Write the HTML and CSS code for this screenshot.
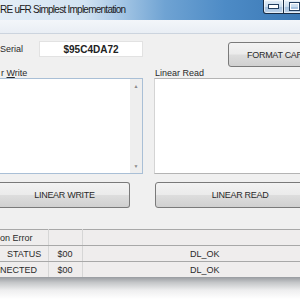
FILE: index.html
```html
<!DOCTYPE html>
<html lang="en">
<head>
  <meta charset="UTF-8">
  <title>uFR Simplest Implementation</title>
  <link rel="stylesheet" href="styles.css">
</head>
<body>
  <div class="window">
    <div class="titlebar">
      <span class="title">RE uFR Simplest Implementation</span>
      <div class="controls">
        <span class="ctl">
          <svg width="11" height="5" viewBox="0 0 11 5"><rect x="0.5" y="0.5" width="10" height="4" fill="#fff" stroke="#233f60"/></svg>
        </span>
        <span class="ctl">
          <svg width="11" height="9" viewBox="0 0 11 9"><rect x="1" y="1" width="9" height="7" fill="none" stroke="#233f60" stroke-width="2"/><rect x="1.5" y="1.5" width="8" height="6" fill="none" stroke="#fff"/></svg>
        </span>
      </div>
    </div>
    <div class="band"></div>

    <div class="panel">
      <div class="top-row">
        <div class="serial">
          <span class="serial-label">Serial</span>
          <div class="serial-box">$95C4DA72</div>
        </div>
        <button class="btn btn-format">FORMAT CARD</button>
      </div>

      <div class="io">
        <div class="col">
          <div class="lbl">r <u>W</u>rite</div>
          <div class="memo memo-write">
            <div class="scrollbar">
              <span class="arrow">&#9650;</span>
              <span class="arrow">&#9660;</span>
            </div>
          </div>
          <button class="btn btn-write">LINEAR WRITE</button>
        </div>
        <div class="col">
          <div class="lbl">Linear Read</div>
          <div class="memo memo-read"></div>
          <button class="btn btn-read">LINEAR READ</button>
        </div>
      </div>

      <table class="status">
        <colgroup>
          <col class="c-name">
          <col class="c-code">
          <col>
        </colgroup>
        <tr>
          <td class="name">on Error</td>
          <td class="code"></td>
          <td class="msg"></td>
        </tr>
        <tr>
          <td class="name indent">STATUS</td>
          <td class="code">$00</td>
          <td class="msg">DL_OK</td>
        </tr>
        <tr>
          <td class="name">NECTED</td>
          <td class="code">$00</td>
          <td class="msg">DL_OK</td>
        </tr>
      </table>
    </div>
    <div class="shadow"></div>
  </div>
</body>
</html>
```

FILE: styles.css
```css
html, body {
  margin: 0;
  overflow: hidden;
  background-color: #ffffff;
}
body {
  font-family: "Liberation Sans", Arial, sans-serif;
  color: #2a2a2a;
}
.window {
  width: 300px;
  height: 300px;
  overflow: hidden;
}
.titlebar {
  height: 20px;
  display: flex;
  align-items: flex-start;
  background: linear-gradient(to right, #e4eef7 0, #d2e3f2 28%, #a6c7e5 40%, #6fa3d3 55%, #4d8bc6 75%, #3a78b5 100%);
}
.title {
  font-size: 10px;
  letter-spacing: -0.75px;
  line-height: 20px;
  color: #1a1a1a;
  white-space: nowrap;
}
.controls {
  display: flex;
  flex-shrink: 0;
  margin-left: auto;
  margin-right: -5px;
}
.ctl {
  width: 21px;
  height: 14px;
  display: flex;
  align-items: center;
  justify-content: center;
  border: 1px solid #182c45;
  border-top: none;
  background: linear-gradient(#e6eff8 0, #c9dcee 50%, #a3bfdd 51%, #bcd3ea 100%);
  box-shadow: inset 0 0 0 1px rgba(255, 255, 255, 0.6);
  box-sizing: border-box;
}
.ctl:first-child {
  border-radius: 0 0 0 3px;
}
.ctl + .ctl {
  border-left: none;
}
.band {
  height: 13px;
  background: linear-gradient(#f3f6fa, #e9eef4);
  border-bottom: 1px solid #ccd4de;
}
.panel {
  background-color: #f0f0f0;
  height: 243px;
}
.top-row {
  height: 34px;
  display: flex;
  justify-content: space-between;
  align-items: flex-start;
}
.serial {
  display: flex;
  align-items: center;
  margin-top: 7px;
}
.serial-label {
  font-size: 9px;
  width: 39px;
}
.serial-box {
  width: 104px;
  height: 16px;
  line-height: 16px;
  background-color: #ffffff;
  border: 1px solid #e2e2e2;
  box-sizing: border-box;
  text-align: center;
  font-weight: bold;
  font-size: 10px;
  color: #222222;
}
.btn {
  font-family: "Liberation Sans", Arial, sans-serif;
  font-size: 9px;
  letter-spacing: -0.3px;
  color: #2a2a2a;
  border: 1px solid #7a7a7a;
  border-radius: 3px;
  background: linear-gradient(#f3f3f3 0, #ebebeb 48%, #dddddd 52%, #d0d0d0 100%);
  padding: 0;
  box-sizing: border-box;
}
.btn-format {
  width: 100px;
  height: 25px;
  margin-top: 8px;
  margin-right: -28px;
  flex-shrink: 0;
}
.io {
  display: grid;
  grid-template-columns: 143px 170px;
  column-gap: 11px;
}
.lbl {
  font-size: 9px;
  height: 10px;
  line-height: 10px;
  padding-left: 1px;
}
.memo {
  height: 96px;
  background-color: #ffffff;
  box-sizing: border-box;
  display: flex;
  justify-content: flex-end;
}
.memo-write {
  border: 1px solid #a9bfd6;
  border-left: none;
}
.memo-read {
  border: 1px solid #b4b4b4;
  border-right: none;
  border-left-color: #d4d4d4;
}
.scrollbar {
  width: 12px;
  background-color: #eeeeee;
  display: flex;
  flex-direction: column;
  justify-content: space-between;
  align-items: center;
  padding: 4px 0;
}
.arrow {
  font-size: 5px;
  color: #8a8a8a;
}
.btn-write {
  width: 130px;
  height: 26px;
  margin-top: 8px;
  border-left: none;
  border-radius: 0 3px 3px 0;
}
.btn-read {
  width: 170px;
  height: 26px;
  margin-top: 8px;
  margin-left: 1px;
}
.status {
  margin-top: 21px;
  width: 328px;
  table-layout: fixed;
  border-collapse: collapse;
  background-color: #efeded;
  font-size: 9px;
}
.c-name {
  width: 48px;
}
.c-code {
  width: 34px;
}
.status td {
  height: 15px;
  padding: 0;
  border-top: 1px solid #a8a8a8;
  border-bottom: 1px solid #a8a8a8;
  border-right: 1px solid #d6d6d6;
  white-space: nowrap;
  overflow: hidden;
}
.indent {
  padding-left: 7px !important;
}
.code {
  text-align: center;
}
.msg {
  text-align: center;
}
.shadow {
  height: 22px;
  background: linear-gradient(#989ba0 0, #c4c6c8 25%, #eeeeef 60%, #ffffff 100%);
}
```
